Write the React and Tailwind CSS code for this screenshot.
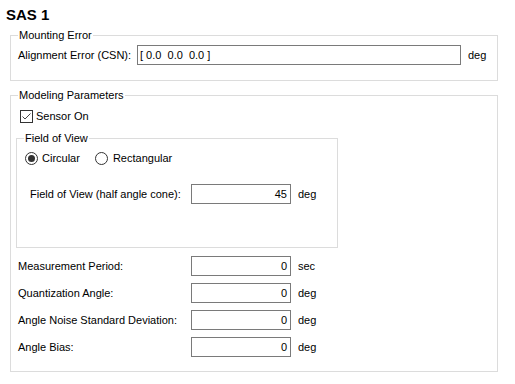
import React from "react";

function Field({ value, width, align = "right", className = "" }) {
  return (
    <div
      className={`h-[20px] border border-[#7a7a7a] bg-white flex items-center whitespace-pre text-[11px] leading-[13px] ${
        align === "right" ? "justify-end pr-[3px]" : "justify-start pl-[2px]"
      } ${className}`}
      style={{ width }}
    >
      {value}
    </div>
  );
}

function Row({ label, value, unit, labelW, labelPl }) {
  return (
    <div className="flex items-center h-[20px]">
      <div className={`${labelW} ${labelPl} shrink-0`}>{label}</div>
      <Field value={value} width={100} />
      <div className="ml-[7px]">{unit}</div>
    </div>
  );
}

export default function App() {
  return (
    <div className="w-[515px] h-[384px] bg-white text-black overflow-hidden font-['Liberation_Sans',Arial,sans-serif] text-[11px] leading-[13px]">
      <div className="pl-[6px] pt-[6px] text-[15px] leading-[17px] font-bold">SAS 1</div>

      <fieldset className="ml-[10px] mt-[6px] w-[488px] border border-[#dcdcdc] pb-[15px]">
        <legend className="ml-[7px] px-[1px] text-[11px] leading-[13px]">Mounting Error</legend>
        <div className="flex items-center h-[20px] mt-[3px]">
          <div className="w-[126px] pl-[7px] shrink-0">Alignment Error (CSN):</div>
          <Field value="[ 0.0  0.0  0.0 ]" width={324} align="left" />
          <div className="ml-[7px]">deg</div>
        </div>
      </fieldset>

      <fieldset className="ml-[10px] mt-[8px] w-[488px] border border-[#dcdcdc] pb-[14px]">
        <legend className="ml-[7px] px-[1px] text-[11px] leading-[13px]">Modeling Parameters</legend>

        <div className="flex items-center h-[13px] mt-[8px] ml-[9px]">
          <div className="w-[13px] h-[13px] border border-[#333333] bg-white flex items-center justify-center">
            <svg width="11" height="11" viewBox="0 0 11 11">
              <path d="M1.5 5.5 L4 8 L9.5 2.5" fill="none" stroke="#444444" strokeWidth="1" />
            </svg>
          </div>
          <span className="ml-[3px]">Sensor On</span>
        </div>

        <fieldset className="ml-[5px] mt-[9px] w-[322px] h-[116px] border border-[#dcdcdc]">
          <legend className="ml-[7px] px-[1px] text-[11px] leading-[13px]">Field of View</legend>
          <div className="flex items-center h-[13px] mt-[7px] ml-[8px]">
            <div className="w-[13px] h-[13px] rounded-full border border-[#333333] flex items-center justify-center">
              <div className="w-[7px] h-[7px] rounded-full bg-[#333333]" />
            </div>
            <span className="ml-[4px]">Circular</span>
            <div className="ml-[15px] w-[13px] h-[13px] rounded-full border border-[#333333]" />
            <span className="ml-[5px]">Rectangular</span>
          </div>
          <div className="mt-[19px]">
            <Row label="Field of View (half angle cone):" value="45" unit="deg" labelW="w-[174px]" labelPl="pl-[13px]" />
          </div>
        </fieldset>

        <div className="mt-[8px] flex flex-col gap-[7px]">
          <Row label="Measurement Period:" value="0" unit="sec" labelW="w-[180px]" labelPl="pl-[7px]" />
          <Row label="Quantization Angle:" value="0" unit="deg" labelW="w-[180px]" labelPl="pl-[7px]" />
          <Row label="Angle Noise Standard Deviation:" value="0" unit="deg" labelW="w-[180px]" labelPl="pl-[7px]" />
          <Row label="Angle Bias:" value="0" unit="deg" labelW="w-[180px]" labelPl="pl-[7px]" />
        </div>
      </fieldset>
    </div>
  );
}
